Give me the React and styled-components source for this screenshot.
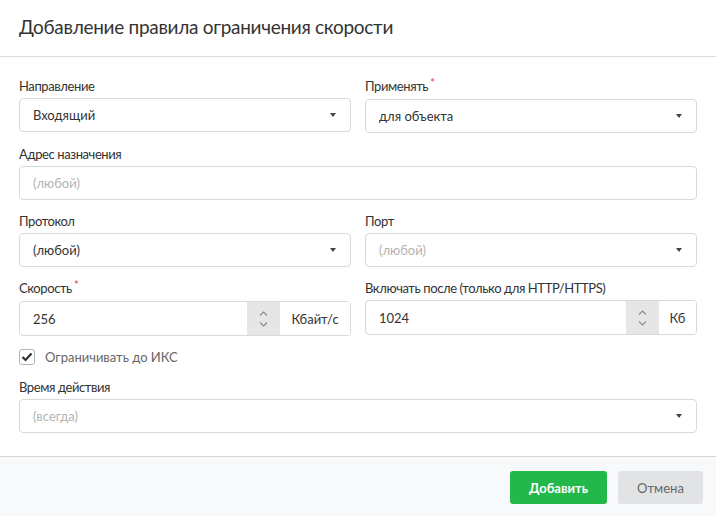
import React from 'react';
import styled, { createGlobalStyle } from 'styled-components';

const GlobalStyle = createGlobalStyle`
  html, body { margin: 0; padding: 0; background: #fff; }
  body { font-family: Lato, "Open Sans", Arial, sans-serif; color: #333; }
  * { box-sizing: border-box; }
`;

const Dialog = styled.div`
  width: 716px;
  height: 516px;
  display: flex;
  flex-direction: column;
  background: #fff;
  overflow: hidden;
`;

const Header = styled.div`
  height: 57px;
  padding: 14px 19px 0;
  border-bottom: 1px solid #dcdcdc;
`;

const Title = styled.h2`
  margin: 0;
  font-size: 19px;
  line-height: 26px;
  font-weight: 400;
  letter-spacing: -0.3px;
  color: #333;
`;

const Body = styled.div`
  padding: 20px 19px 23px 19px;
  display: flex;
  flex-direction: column;
  gap: 12px;
`;

const Row = styled.div`
  display: grid;
  grid-template-columns: ${p => (p.$wide ? '1fr' : '1fr 1fr')};
  column-gap: 14px;
`;

const Field = styled.div`
  display: flex;
  flex-direction: column;
`;

const Label = styled.label`
  font-size: 13px;
  line-height: 18px;
  letter-spacing: -0.4px;
  margin-bottom: 3px;
  color: #333;
`;

const Req = styled.span`
  color: #e53935;
  font-size: 11px;
  position: relative;
  top: -4px;
  margin-left: 2px;
`;

const Box = styled.div`
  height: 34px;
  border: 1px solid #d9d9d9;
  border-radius: 4px;
  background: #fff;
  display: flex;
  align-items: center;
  padding: 0 14px 0 13px;
  font-size: 13px;
  color: ${p => (p.$placeholder ? '#b3b3b3' : '#333')};
`;

const Value = styled.span`
  flex: 1;
`;

const Caret = styled.span`
  width: 0;
  height: 0;
  border-left: 3.5px solid transparent;
  border-right: 3.5px solid transparent;
  border-top: 4px solid #444;
`;

const Group = styled.div`
  height: 35px;
  display: flex;
  border: 1px solid #d9d9d9;
  border-radius: 4px;
  overflow: hidden;
  font-size: 13px;
`;

const NumValue = styled.div`
  flex: 1;
  display: flex;
  align-items: center;
  padding-left: 13px;
  color: #333;
`;

const Spinner = styled.div`
  width: 33px;
  background: #e6e6e6;
  display: flex;
  flex-direction: column;
  align-items: center;
  justify-content: center;
  gap: 6px;
`;

const Addon = styled.div`
  width: ${p => p.$w}px;
  display: flex;
  align-items: center;
  justify-content: center;
  color: #333;
  background: #fff;
`;

const CheckRow = styled.label`
  display: flex;
  align-items: center;
  gap: 10px;
  font-size: 13px;
  color: #666;
  height: 18px;
`;

const CheckBox = styled.span`
  width: 16px;
  height: 16px;
  border: 1px solid #b5b5b5;
  border-radius: 3px;
  display: flex;
  align-items: center;
  justify-content: center;
`;

const Footer = styled.div`
  flex: 1;
  border-top: 1px solid #d6d6d6;
  background: #f8f9fa;
  display: flex;
  justify-content: flex-end;
  align-items: flex-start;
  gap: 11px;
  padding: 14px 13px 0;
`;

const Button = styled.button`
  height: 33px;
  padding: 0;
  border: none;
  border-radius: 3px;
  font-family: Lato, Arial, sans-serif;
  font-size: 13px;
  font-weight: ${p => (p.$primary ? 700 : 400)};
  background: ${p => (p.$primary ? '#22b84a' : '#e2e3e5')};
  color: ${p => (p.$primary ? '#fff' : '#666')};
  width: ${p => p.$w}px;
`;

const Chevron = ({ up }) => (
  <svg width="9" height="5" viewBox="0 0 9 5">
    <path
      d={up ? 'M1 4.5 L4.5 1 L8 4.5' : 'M1 0.5 L4.5 4 L8 0.5'}
      fill="none"
      stroke="#8a8a8a"
      strokeWidth="1.1"
    />
  </svg>
);

function Select({ value, placeholder }) {
  return (
    <Box $placeholder={placeholder}>
      <Value>{value}</Value>
      <Caret />
    </Box>
  );
}

function NumberField({ value, unit, unitWidth }) {
  return (
    <Group>
      <NumValue>{value}</NumValue>
      <Spinner>
        <Chevron up />
        <Chevron />
      </Spinner>
      <Addon $w={unitWidth}>{unit}</Addon>
    </Group>
  );
}

export default function App() {
  return (
    <>
      <GlobalStyle />
      <Dialog>
        <Header>
          <Title>Добавление правила ограничения скорости</Title>
        </Header>
        <Body>
          <Row>
            <Field>
              <Label>Направление</Label>
              <Select value="Входящий" />
            </Field>
            <Field>
              <Label>Применять<Req>*</Req></Label>
              <Select value="для объекта" />
            </Field>
          </Row>
          <Row $wide>
            <Field>
              <Label>Адрес назначения</Label>
              <Box $placeholder>(любой)</Box>
            </Field>
          </Row>
          <Row>
            <Field>
              <Label>Протокол</Label>
              <Select value="(любой)" />
            </Field>
            <Field>
              <Label>Порт</Label>
              <Select value="(любой)" placeholder />
            </Field>
          </Row>
          <Row>
            <Field>
              <Label>Скорость<Req>*</Req></Label>
              <NumberField value="256" unit="Кбайт/с" unitWidth={70} />
            </Field>
            <Field>
              <Label>Включать после (только для HTTP/HTTPS)</Label>
              <NumberField value="1024" unit="Кб" unitWidth={37} />
            </Field>
          </Row>
          <CheckRow>
            <CheckBox>
              <svg width="12" height="10" viewBox="0 0 12 10">
                <path d="M1.5 5 L4.5 8 L10.5 1.5" fill="none" stroke="#333" strokeWidth="2.2" />
              </svg>
            </CheckBox>
            Ограничивать до ИКС
          </CheckRow>
          <Row $wide>
            <Field>
              <Label>Время действия</Label>
              <Select value="(всегда)" placeholder />
            </Field>
          </Row>
        </Body>
        <Footer>
          <Button $primary $w={97}>Добавить</Button>
          <Button $w={85}>Отмена</Button>
        </Footer>
      </Dialog>
    </>
  );
}
